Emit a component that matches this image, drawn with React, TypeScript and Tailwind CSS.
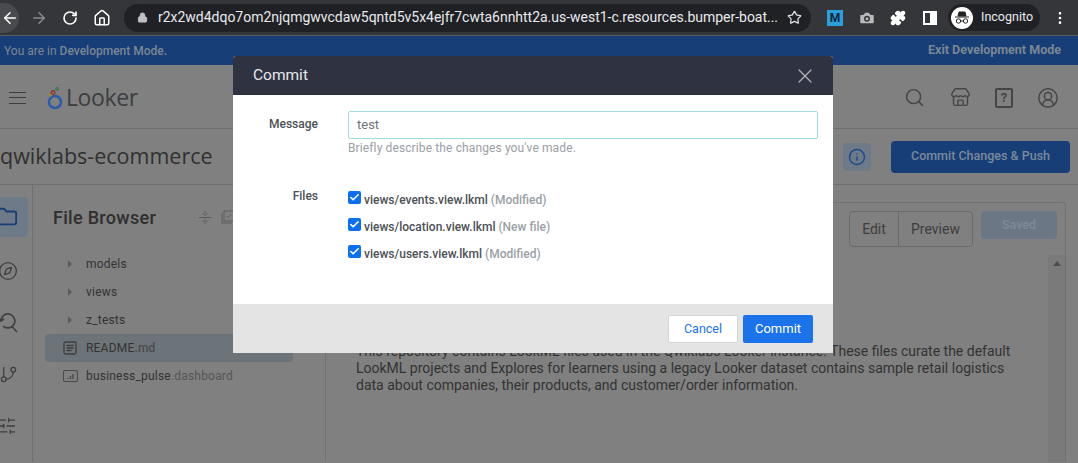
import { ArrowLeft, ArrowRight, RotateCw, Home, Lock, Star, Puzzle, Camera, EllipsisVertical, Search, Store, CircleUserRound, Info, Folder, Compass, GitBranch, SlidersHorizontal, X, Check } from 'lucide-react';

const fileRows = [
  { name: 'views/events.view.lkml', note: '(Modified)' },
  { name: 'views/location.view.lkml', note: '(New file)' },
  { name: 'views/users.view.lkml', note: '(Modified)' },
];

function TreeRow({ name, ext, icon, active }: { name: string; ext?: string; icon: 'folder' | 'doc' | 'chart'; active?: boolean }) {
  return (
    <div className={`h-7 flex items-center rounded-[4px] ${active ? 'bg-[#6d7479]' : ''}`}>
      <div className="w-[41px] flex justify-center pl-[9px]">
        {icon === 'folder' && <div className="w-0 h-0 border-y-[4px] border-y-transparent border-l-[4px] border-l-[#5c5c5c]" />}
        {icon === 'doc' && (
          <svg width="14" height="14" viewBox="0 0 14 14" fill="none" stroke="#3d3d3d" strokeWidth="1.3">
            <rect x="1" y="1" width="12" height="12" rx="1.5" />
            <path d="M3.5 4.5h7M3.5 7h7M3.5 9.5h5" />
          </svg>
        )}
        {icon === 'chart' && (
          <svg width="15" height="12" viewBox="0 0 15 12" fill="none" stroke="#4a4a4a" strokeWidth="1.1">
            <rect x="0.5" y="0.5" width="14" height="11" rx="1.5" />
            <path d="M5 9V8M7.5 9V6M10 9V4" strokeWidth="1.4" />
          </svg>
        )}
      </div>
      <span className="text-[12px] text-[#333] tracking-[0.2px]">
        {name}
        {ext && <span className={active ? 'font-medium text-[#4b4b4b]' : 'text-[#555]'}>{ext}</span>}
      </span>
    </div>
  );
}

function App() {
  return (
    <div className="relative w-[1078px] h-[463px] overflow-hidden bg-[#808080] font-['Roboto',sans-serif]">
      {/* browser chrome */}
      <div className="h-[36px] bg-[#35363a] border-b border-[#5c5d60] flex items-center text-white">
        <div className="w-[19px] h-[30px] rounded-r-full bg-[#4a4b4f] flex items-center justify-end">
          <ArrowLeft size={18} className="-ml-1" />
        </div>
        <ArrowRight size={18} className="ml-[11px] text-[#8a8b8d]" />
        <RotateCw size={16} className="ml-[14px]" strokeWidth={2.4} />
        <Home size={18} className="ml-[15px]" />
        <div className="ml-[13px] w-[687px] h-7 rounded-full bg-[#202124] flex items-center pl-[13px]">
          <Lock size={11} className="text-[#bdc1c6]" fill="#bdc1c6" />
          <span className="ml-[10px] text-[14px] text-[#e8eaed] whitespace-nowrap tracking-[-0.02px]">r2x2wd4dqo7om2njqmgwvcdaw5qntd5v5x4ejfr7cwta6nnhtt2a.us-west1-c.resources.bumper-boat...</span>
        </div>
        <div className="absolute left-[787px] top-[10px]"><Star size={15} className="text-[#dfe1e5]" /></div>
        <div className="ml-[16px] w-4 h-4 bg-[#2b9fdc] text-[#10263a] text-[12px] font-bold flex items-center justify-center">M</div>
        <Camera size={18} className="ml-[15px] text-[#35363a]" fill="#b9babb" />
        <Puzzle size={16} className="ml-[14px]" fill="white" />
        <div className="ml-[17px] w-[14px] h-[14px] border-2 border-white flex justify-end"><div className="w-[5px] bg-white" /></div>
        <div className="ml-[11px] h-[27px] w-[92px] rounded-full bg-[#202124] flex items-center">
          <div className="w-[22px] h-[22px] rounded-full bg-white flex items-center justify-center ml-[3px]">
            <svg width="16" height="14" viewBox="0 0 16 14" fill="none" stroke="#222">
              <path d="M4 5l1-4h6l1 4z" fill="#222" />
              <path d="M1 6h14" />
              <circle cx="4.5" cy="10" r="2.2" />
              <circle cx="11.5" cy="10" r="2.2" />
              <path d="M6.7 10h2.6" />
            </svg>
          </div>
          <span className="ml-2 text-[12.5px] text-[#e8eaed]">Incognito</span>
        </div>
        <EllipsisVertical size={16} className="ml-[12px]" />
      </div>

      {/* dev mode banner */}
      <div className="h-[29px] bg-[#173e76] flex items-center justify-between pl-1 pr-[17px] text-[12px] text-[#7a8694]">
        <span>You are in <span className="font-medium">Development Mode.</span></span>
        <span className="text-[12.5px] font-bold">Exit Development Mode</span>
      </div>

      {/* looker header */}
      <div className="h-[64px] border-b border-[#707070] flex items-center pl-[9px] pr-[19px] pt-[2px]">
        <div className="w-[17px] h-[12px] border-y-[1.5px] border-[#3d3d3d] flex items-center">
          <div className="w-full h-[1.5px] bg-[#3d3d3d]" />
        </div>
        <svg width="16" height="24" viewBox="0 0 16 24" fill="none" className="ml-[21px]">
          <circle cx="8" cy="16" r="6" stroke="#2a5caa" strokeWidth="2.6" />
          <circle cx="6" cy="6.5" r="1.8" stroke="#8f3a30" strokeWidth="1.4" />
          <circle cx="3" cy="9" r="1.2" stroke="#a5842a" strokeWidth="1.2" />
          <circle cx="10" cy="3" r="1.4" stroke="#3a7a48" strokeWidth="1.2" />
        </svg>
        <span className="ml-[3px] text-[23px] text-[#3b3f42] tracking-[-0.4px] font-['Open_Sans',sans-serif]">Looker</span>
        <div className="ml-auto flex items-center text-[#454545]">
          <Search size={21} strokeWidth={1.7} />
          <Store size={21} strokeWidth={1.6} className="ml-[25px]" />
          <div className="ml-[24px] w-[18px] h-[20px] border-2 border-[#454545] rounded-[2px] text-[13px] font-bold flex items-center justify-center">?</div>
          <CircleUserRound size={22} strokeWidth={1.6} className="ml-[24px]" />
        </div>
      </div>

      {/* project row */}
      <div className="h-[56px] border-b border-[#707070] flex items-center pr-[8px]">
        <span className="text-[21.5px] text-[#303030] font-['Open_Sans',sans-serif]">qwiklabs-ecommerce</span>
        <div className="ml-auto w-7 h-7 rounded-[4px] bg-[#6f7a88] flex items-center justify-center">
          <Info size={18} className="text-[#1c4a8c]" />
        </div>
        <div className="ml-5 w-[179px] h-8 rounded-[4px] bg-[#173e76] flex items-center justify-center text-[12.5px] font-medium text-[#7a8a9c]">Commit Changes &amp; Push</div>
      </div>

      {/* workspace */}
      <div className="flex h-[277px]">
        <div className="w-[33px] border-r border-[#707070] flex flex-col items-start pt-3 text-[#3f3f3f]">
          <div className="w-[28px] h-10 rounded-r-[4px] bg-[#6f7a88] flex items-center">
            <Folder size={22} className="text-[#173e76] -ml-[4px]" strokeWidth={2} />
          </div>
          <Compass size={20} className="mt-[24px] -ml-[2px]" strokeWidth={1.6} />
          <svg width="20" height="20" viewBox="0 0 20 20" fill="none" stroke="currentColor" strokeWidth="1.7" className="mt-[32px] -ml-[1px]">
            <path d="M2 6.5A7 7 0 1 1 4 13" />
            <path d="M0 5l2 3 3-2" />
            <path d="M12.5 13l5.5 6" />
          </svg>
          <GitBranch size={19} className="mt-[32px] -ml-[1px]" strokeWidth={1.6} />
          <SlidersHorizontal size={20} className="mt-[32px] -ml-[3px]" strokeWidth={1.6} />
        </div>
        <div className="w-[292px] pl-[12px] pr-[32px] pt-[20px]">
          <div className="flex items-center pl-[8px] h-[24px]">
            <span className="text-[18px] font-medium text-[#2f2f2f] tracking-[0.3px] whitespace-nowrap">File Browser</span>
            <svg width="12" height="13" viewBox="0 0 12 13" fill="none" stroke="#5c5c5c" className="ml-[43px] shrink-0">
              <path d="M0 6.5h12" />
              <path d="M6 0v2.5M3.5 2L6 4.5 8.5 2M6 13v-2.5M3.5 11L6 8.5l2.5 2.5" />
            </svg>
            <svg width="14" height="14" viewBox="0 0 14 14" fill="none" stroke="#5c5c5c" className="ml-[10px] shrink-0">
              <rect x="3" y="1" width="10" height="10" />
              <path d="M1 3v10h10M5.5 6l1.5 1.5L10.5 4" />
            </svg>
          </div>
          <div className="mt-[21px] flex flex-col">
            <TreeRow name="models" icon="folder" />
            <TreeRow name="views" icon="folder" />
            <TreeRow name="z_tests" icon="folder" />
            <TreeRow name="README" ext=".md" icon="doc" active />
            <TreeRow name="business_pulse" ext=".dashboard" icon="chart" />
          </div>
        </div>
        <div className="flex-1 mr-[12px] mt-[17px] border border-[#727272] border-b-0 rounded-t-[4px] flex flex-col">
          <div className="h-[52px] flex justify-end pt-2 pr-2 gap-2">
            <div className="h-[36px] w-[124px] rounded-[4px] border border-[#6a6a6a] flex text-[14px] text-[#3e3e3e]">
              <span className="w-[49px] flex items-center justify-center border-r border-[#6a6a6a]">Edit</span>
              <span className="flex-1 flex items-center justify-center">Preview</span>
            </div>
            <div className="h-7 w-[76px] rounded-[4px] bg-[#6b7785] flex items-center justify-center text-[12.5px] font-medium text-[#7f8a95]">Saved</div>
          </div>
          <div className="flex flex-1">
            <div className="flex-1 pt-[88px] pl-[30px]">
              <p className="w-[660px] text-[14px] leading-[17px] text-[#333]">This repository contains LookML files used in the Qwiklabs Looker instance. These files curate the default LookML projects and Explores for learners using a legacy Looker dataset contains sample retail logistics data about companies, their products, and customer/order information.</p>
            </div>
            <div className="w-[17px] bg-[#7a7a7a] flex justify-center pt-[6px]">
              <div className="w-0 h-0 border-x-[4px] border-x-transparent border-b-[5px] border-b-[#4d4d4d]" />
            </div>
          </div>
        </div>
      </div>

      {/* commit dialog */}
      <div className="absolute left-[233px] top-[56px] w-[600px] h-[297px] rounded-t-[3px] overflow-hidden flex flex-col bg-white">
        <div className="h-[39px] bg-[#2f3341] flex items-center justify-between pl-5 pr-[19px]">
          <span className="text-[15.5px] text-[#e8e9ec]">Commit</span>
          <X size={24} strokeWidth={1.2} className="text-[#b5b7bd] -mr-[3px]" />
        </div>
        <div className="h-[209px] pt-4">
          <div className="flex">
            <label className="w-[85px] text-right text-[12px] font-medium text-[#4c5156] pt-[5px] leading-[16px]">Message</label>
            <div className="ml-[30px] w-[470px]">
              <div className="h-[28px] border border-[#a5dbe0] rounded-[2px] pl-2 flex items-center text-[13px] text-[#6d7378]">test</div>
              <p className="mt-[1px] text-[12px] leading-[16px] text-[#9aa0a6] tracking-[0.12px]">Briefly describe the changes you&apos;ve made.</p>
            </div>
          </div>
          <div className="flex mt-[34px]">
            <label className="w-[85px] text-right text-[12px] font-medium text-[#4c5156] leading-[16px] -mt-[2px]">Files</label>
            <div className="ml-[30px] flex flex-col gap-[14px] mt-[1px]">
              {fileRows.map(row => (
                <div key={row.name} className="h-[13px] flex items-start">
                  <div className="w-[13px] h-[13px] rounded-[2px] bg-[#0b6ff0] flex items-center justify-center">
                    <Check size={11} strokeWidth={3.5} className="text-white" />
                  </div>
                  <span className="ml-[3px] mt-[1px] text-[12px] leading-[16px] font-medium text-[#4c5156]">{row.name} <span className="text-[#9aa0a6]">{row.note}</span></span>
                </div>
              ))}
            </div>
          </div>
        </div>
        <div className="flex-1 bg-[#e4e4e4] flex items-start justify-end gap-[5px] pt-[11px] pr-5">
          <button className="w-[70px] h-[28px] bg-white border border-[#d6d6d6] rounded-[2px] text-[12.5px] text-[#1a73e8]">Cancel</button>
          <button className="w-[70px] h-[28px] bg-[#1a73e8] rounded-[2px] text-[13px] text-white">Commit</button>
        </div>
      </div>
    </div>
  );
}

export default App;
